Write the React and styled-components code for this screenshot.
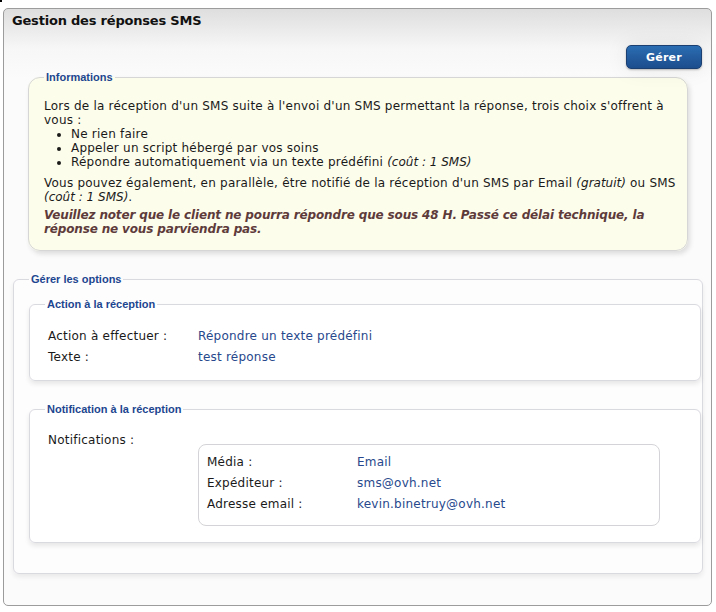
import React from "react";
import styled, { createGlobalStyle } from "styled-components";

const GlobalStyle = createGlobalStyle`
  html, body {
    margin: 0;
    padding: 0;
    background: #ffffff;
  }
  body {
    font-family: "DejaVu Sans", Verdana, sans-serif;
    font-size: 12px;
    letter-spacing: 0.22px;
    color: #1a1a1a;
  }
`;

const Page = styled.div`
  width: 716px;
  height: 612px;
  overflow: hidden;
`;

const Caret = styled.div`
  width: 2px;
  height: 2px;
  background: #000;
`;

const Panel = styled.section`
  margin: 6px 4px 0 3px;
  height: 598px;
  box-sizing: border-box;
  border: 1px solid #9c9c9c;
  border-radius: 5px;
  background: linear-gradient(#dedede, #f7f7f7 40px, #fbfbfb 70px, #fbfbfb);
  padding: 4px 0 0 0;
`;

const Title = styled.h1`
  margin: 0;
  padding-left: 8px;
  font-size: 13px;
  line-height: 16px;
  letter-spacing: -0.2px;
  font-weight: bold;
  color: #111;
`;

const Toolbar = styled.div`
  display: flex;
  justify-content: flex-end;
  padding: 16px 9px 0 0;
`;

const Button = styled.button`
  width: 76px;
  height: 24px;
  border: 1px solid #1c3f72;
  border-radius: 5px;
  background: linear-gradient(#2b6db2, #1c4d8d);
  color: #fff;
  font-family: "DejaVu Sans", sans-serif;
  font-weight: bold;
  font-size: 11px;
  letter-spacing: 0.2px;
  box-shadow: 0 1px 2px rgba(0, 0, 0, 0.25), 0 0 22px rgba(0, 0, 0, 0.08);
  cursor: pointer;
`;

const Fieldset = styled.fieldset`
  margin: ${(p) => p.$margin || "0"};
  padding: 0;
  min-width: 0;
  border: 1px solid ${(p) => p.$border || "#d9d9e0"};
  border-radius: ${(p) => p.$radius || "6px"};
  background: ${(p) => p.$bg || "#fff"};
  box-shadow: ${(p) => p.$shadow || "none"};
`;

const Legend = styled.legend`
  margin-left: 15px;
  padding: 0 2px;
  font-family: "Liberation Sans", Arial, sans-serif;
  font-weight: bold;
  font-size: 11px;
  line-height: 13px;
  letter-spacing: 0;
  color: #1d4690;
`;

const InfoBody = styled.div`
  padding: 15px 8px 14px 15px;
  line-height: 14px;
`;

const Para = styled.p`
  margin: ${(p) => p.$margin || "0"};
`;

const Note = styled.i`
  letter-spacing: 0;
`;

const List = styled.ul`
  margin: 0;
  padding-left: 27px;
`;

const Warning = styled.p`
  margin: 4px 0 0;
  font-weight: bold;
  font-style: italic;
  letter-spacing: -0.15px;
  color: #5e3b3b;
`;

const Body = styled.div`
  padding: ${(p) => p.$pad || "0"};
`;

const Row = styled.div`
  display: grid;
  grid-template-columns: 150px 1fr;
  align-items: start;
  line-height: 21px;
`;

const Label = styled.span`
  color: #1a1a1a;
`;

const Value = styled.span`
  color: #27488c;
`;

const SubBox = styled.div`
  margin-top: 14px;
  width: 462px;
  box-sizing: border-box;
  border: 1px solid #d4d4d8;
  border-radius: 8px;
  background: #fff;
  padding: 7px 0 10px 8px;
`;

export default function App() {
  return (
    <Page>
      <GlobalStyle />
      <Caret />
      <Panel>
        <Title>Gestion des réponses SMS</Title>
        <Toolbar>
          <Button>Gérer</Button>
        </Toolbar>

        <Fieldset
          $margin="2px 23px 0 24px"
          $border="#d6d6d6"
          $radius="12px"
          $bg="#fdfdec"
          $shadow="2px 3px 5px rgba(0,0,0,0.12)"
        >
          <Legend>Informations</Legend>
          <InfoBody>
            <Para>
              Lors de la réception d'un SMS suite à l'envoi d'un SMS permettant la réponse, trois choix s'offrent à vous :
            </Para>
            <List>
              <li>Ne rien faire</li>
              <li>Appeler un script hébergé par vos soins</li>
              <li>
                Répondre automatiquement via un texte prédéfini <Note>(coût : 1 SMS)</Note>
              </li>
            </List>
            <Para $margin="7px 0 0">
              Vous pouvez également, en parallèle, être notifié de la réception d'un SMS par Email <Note>(gratuit)</Note> ou SMS{" "}
              <Note>(coût : 1 SMS)</Note>.
            </Para>
            <Warning>
              Veuillez noter que le client ne pourra répondre que sous 48 H. Passé ce délai technique, la réponse ne vous parviendra pas.
            </Warning>
          </InfoBody>
        </Fieldset>

        <Fieldset
          $margin="22px 8px 0 9px"
          $bg="#fdfdfd"
          $shadow="0 3px 5px rgba(0,0,0,0.07)"
        >
          <Legend>Gérer les options</Legend>
          <Body $pad="12px 0 30px 0">
            <Fieldset
              $margin="0 1px 0 15px"
              $shadow="0 3px 5px rgba(0,0,0,0.09)"
            >
              <Legend>Action à la réception</Legend>
              <Body $pad="15px 0 12px 18px">
                <Row>
                  <Label>Action à effectuer :</Label>
                  <Value>Répondre un texte prédéfini</Value>
                </Row>
                <Row>
                  <Label>Texte :</Label>
                  <Value>test réponse</Value>
                </Row>
              </Body>
            </Fieldset>

            <Fieldset
              $margin="22px 1px 0 15px"
              $shadow="0 3px 5px rgba(0,0,0,0.09)"
            >
              <Legend>Notification à la réception</Legend>
              <Body $pad="14px 0 16px 18px">
                <Row>
                  <Label>Notifications :</Label>
                  <SubBox>
                    <Row>
                      <Label>Média :</Label>
                      <Value>Email</Value>
                    </Row>
                    <Row>
                      <Label>Expéditeur :</Label>
                      <Value>sms@ovh.net</Value>
                    </Row>
                    <Row>
                      <Label>Adresse email :</Label>
                      <Value>kevin.binetruy@ovh.net</Value>
                    </Row>
                  </SubBox>
                </Row>
              </Body>
            </Fieldset>
          </Body>
        </Fieldset>
      </Panel>
    </Page>
  );
}
